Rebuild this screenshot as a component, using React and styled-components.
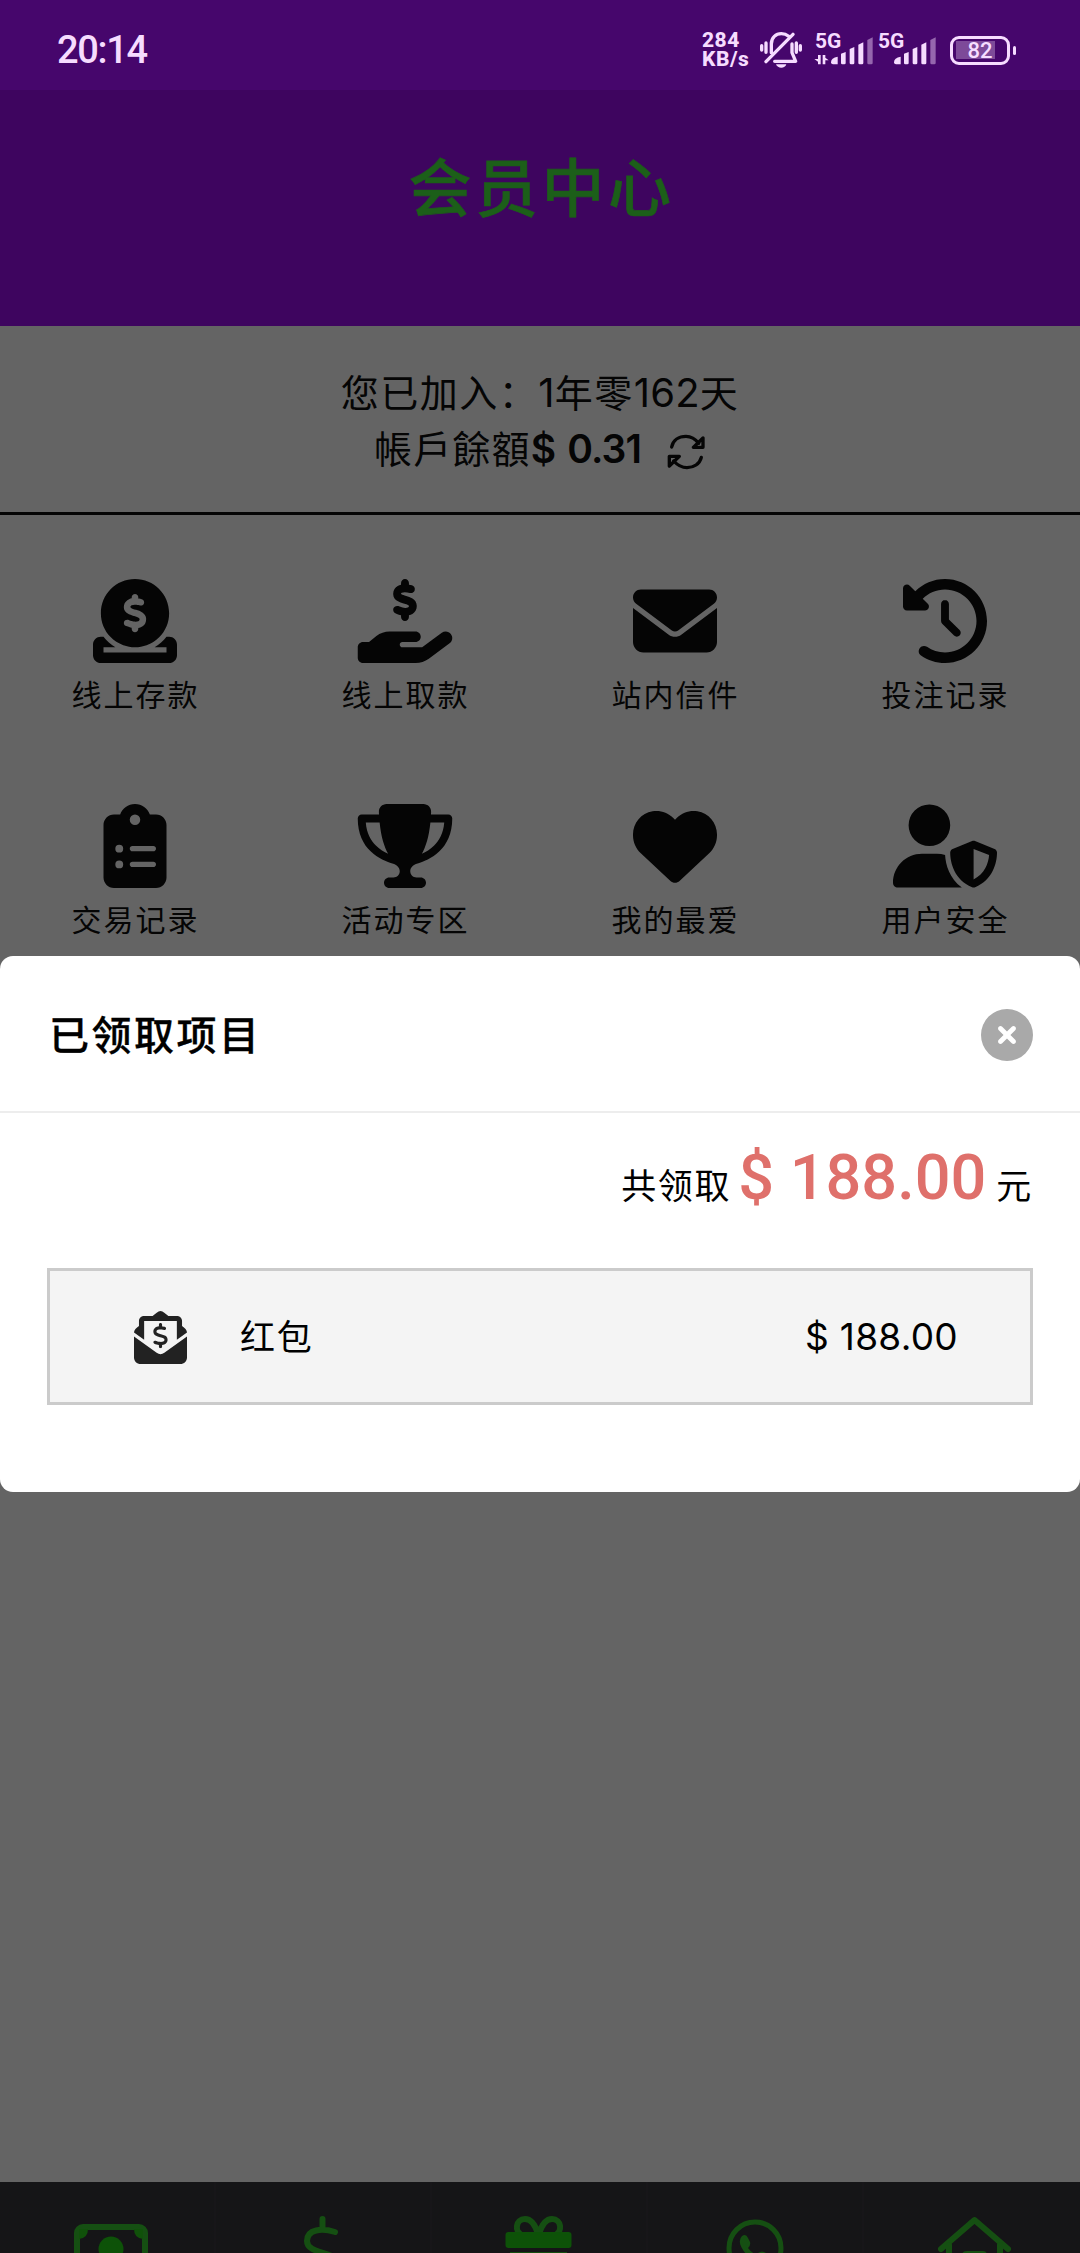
import { useState } from "react";
import styled, { createGlobalStyle, css } from "styled-components";
import {
  FaCircleDollarToSlot,
  FaCircleXmark,
  FaClipboardList,
  FaClockRotateLeft,
  FaDollarSign,
  FaEnvelope,
  FaHandHoldingDollar,
  FaHeart,
  FaTrophy,
  FaUserShield
} from "react-icons/fa6";

const MENUS = [
  { name: "线上存款", icon: FaCircleDollarToSlot },
  { name: "线上取款", icon: FaHandHoldingDollar },
  { name: "站内信件", icon: FaEnvelope },
  { name: "投注记录", icon: FaClockRotateLeft },
  { name: "交易记录", icon: FaClipboardList },
  { name: "活动专区", icon: FaTrophy },
  { name: "我的最爱", icon: FaHeart },
  { name: "用户安全", icon: FaUserShield }
];

const MutedBell = () => (
  <svg width="42" height="37" viewBox="300 96 126 111" fill="none">
    <g stroke="#f6dcff" strokeWidth="10" strokeLinecap="round">
      <path d="M334 158V132C334 112 348 101 364 101C372 101 380 104 386 109" />
      <path d="M396 132V158L407 184H344" strokeLinejoin="round" />
      <path d="M318 185L399 103" />
      <path d="M305 137V150M318 129V157M409 129V157M421 137V150" />
    </g>
    <path d="M348 193H379C376 207 352 207 348 193Z" fill="#f6dcff" />
  </svg>
);

const SignalBars = ({ data }) => (
  <svg width="60" height="28" viewBox="464 108 180 84">
    <g fill="#f6dcff">
      <path d="M515 184Q515 170 535 167V190H521Q515 190 515 184Z" />
      <path d="M545 158L559 153V186Q559 190 555 190H549Q545 190 545 186Z" />
      <path d="M571 144L585 138V186Q585 190 581 190H575Q571 190 571 186Z" />
      <path d="M597 131L612 124V186Q612 190 608 190H601Q597 190 597 186Z" />
      <path
        opacity="0.45"
        d="M624 117L640 109V186Q640 190 636 190H628Q624 190 624 186Z"
      />
      {data && (
        <path d="M476 162H484V190H476V182L465 174H476ZM490 162H498V170L508 178H498V190H490Z" />
      )}
    </g>
  </svg>
);

const RefreshIcon = () => (
  <svg width="39" height="36" viewBox="1100 282 117 108" fill="none">
    <g
      stroke="#050505"
      strokeWidth="10"
      strokeLinecap="round"
      strokeLinejoin="round"
    >
      <path d="M1114 321C1118 300 1136 289 1157 289C1174 289 1185 297 1195 310" />
      <path d="M1208 294V322H1179Z" />
      <path d="M1203 352C1198 372 1180 383 1160 383C1143 383 1130 374 1120 363" />
      <path d="M1107 378V349H1137Z" />
    </g>
  </svg>
);

const EnvelopeDollar = () => (
  <svg width="53" height="53" viewBox="0 0 512 512" fill="#222">
    <path d="M256 0C230 0 210 26 180 48H96C69 48 48 69 48 96V144C22 164 0 180 0 208L98 278V96H414V278L512 208C512 180 490 164 464 144V96C464 69 443 48 416 48H332C302 26 282 0 256 0Z" />
    <path d="M0 246L219 404Q256 430 293 404L512 246V448C512 483 483 512 448 512H64C29 512 0 483 0 448Z" />
    <FaDollarSign x="134" y="116" size="244" color="#222" />
  </svg>
);

const CashIcon = () => (
  <svg width="216" height="71" viewBox="0 0 216 71" fill="none">
    <rect x="77" y="45" width="68" height="46" rx="6" stroke="#154f12" strokeWidth="6" />
    <path d="M79 47H88Q88 56 79 57ZM143 47H134Q134 56 143 57Z" fill="#10510a" />
    <circle cx="111" cy="67" r="12.5" fill="#0d5208" />
  </svg>
);

const DollarIcon = () => (
  <svg width="216" height="71" viewBox="216 0 216 71" fill="none">
    <path
      d="M322.5 37V46M335 50C322 46 307 47 307 59C307 73 337 68 337 82"
      stroke="#154f12"
      strokeWidth="6"
      strokeLinecap="round"
    />
  </svg>
);

const GiftIcon = () => (
  <svg width="216" height="71" viewBox="432 0 216 71" fill="none">
    <path
      d="M538 52C535 42 530 37 525 37C515 37 515 50 521 52M539 52C542 42 547 37 552 37C562 37 562 50 556 52"
      stroke="#154f12"
      strokeWidth="6"
    />
    <rect x="505.5" y="50" width="66" height="16" rx="3" fill="#0d5208" />
    <path d="M510 70H567V71H510Z" fill="#154f12" />
  </svg>
);

const PhoneIcon = () => (
  <svg width="216" height="71" viewBox="648 0 216 71" fill="none">
    <circle cx="755" cy="66" r="26" stroke="#154f12" strokeWidth="5" />
    <path
      d="M742 54Q746 51 748 56L750 60Q751 63 748 66Q751 70 755 72H746Q736 60 742 54Z"
      fill="#154f12"
    />
    <path d="M758 71Q762 68 766 71Z" fill="#154f12" />
  </svg>
);

const HomeIcon = () => (
  <svg width="216" height="71" viewBox="864 0 216 71" fill="none">
    <g stroke="#154f12" strokeWidth="6" strokeLinecap="round" strokeLinejoin="round">
      <path d="M941 67L974.5 38L1008 67" />
      <path d="M949 63V80M1000 63V80" />
    </g>
    <path d="M962 80V73Q962 69 967 69H983Q987 69 987 73V80Z" fill="#154f12" />
  </svg>
);

const NAVS = [CashIcon, DollarIcon, GiftIcon, PhoneIcon, HomeIcon];

const App = () => {
  const [openModal, setOpenModal] = useState(true);

  return (
    <Page>
      <GlobalStyle />
      <StatusBar>
        <Time>20:14</Time>
        <StatusIcons>
          <Speed>
            <span>284</span>
            <span>KB/s</span>
          </Speed>
          <MutedBell />
          <Signal $first>
            <SignalLabel>5G</SignalLabel>
            <SignalBars data />
          </Signal>
          <Signal>
            <SignalLabel>5G</SignalLabel>
            <SignalBars />
          </Signal>
          <Battery>82</Battery>
        </StatusIcons>
      </StatusBar>
      <Header>会员中心</Header>
      <Account>
        <Joined>
          您已加入：<span>1</span>年零<span>162</span>天
        </Joined>
        <Balance>
          帳戶餘額<b>$ 0.31</b>
          <RefreshIcon />
        </Balance>
      </Account>
      <MenuGrid>
        {MENUS.map(({ name, icon: Icon }) => (
          <MenuItem key={name}>
            <Icon />
            <span>{name}</span>
          </MenuItem>
        ))}
      </MenuGrid>
      <BottomNav>
        {NAVS.map((Icon, index) => (
          <NavItem key={index}>
            <Icon />
          </NavItem>
        ))}
      </BottomNav>

      {openModal && (
        <Modal>
          <ModalHeader>
            <h2>已领取项目</h2>
            <CloseButton onClick={() => setOpenModal(false)}>
              <FaCircleXmark />
            </CloseButton>
          </ModalHeader>
          <Total>
            <span>共领取</span>
            <strong>$ 188.00</strong>
            <span>元</span>
          </Total>
          <Reward>
            <EnvelopeDollar />
            <RewardName>红包</RewardName>
            <RewardAmount>$ 188.00</RewardAmount>
          </Reward>
        </Modal>
      )}
    </Page>
  );
};

const GlobalStyle = createGlobalStyle`
  * {
    box-sizing: border-box;
  }
  body {
    margin: 0;
    background: #646464;
  }
`;

const flexCenter = css`
  display: flex;
  align-items: center;
  justify-content: center;
`;

const Page = styled.div`
  position: relative;
  display: flex;
  flex-direction: column;
  width: 1080px;
  height: 2253px;
  overflow: hidden;
  background: #646464;
  color: #050505;
  font-family: Inter, "Noto Sans CJK SC", sans-serif;
`;

const StatusBar = styled.div`
  display: flex;
  justify-content: space-between;
  align-items: center;
  height: 90px;
  padding: 10px 70px 0 57px;
  background: #46066c;
  color: #f6dcff;
  font-family: Roboto, sans-serif;
`;

const Time = styled.div`
  font-size: 38px;
  font-weight: 500;
  letter-spacing: -1.3px;
`;

const StatusIcons = styled.div`
  display: flex;
  align-items: center;
`;

const Speed = styled.div`
  display: flex;
  flex-direction: column;
  width: 58px;
  font-size: 21px;
  font-weight: 800;
  line-height: 19px;
  letter-spacing: 0.5px;
`;

const Signal = styled.div`
  position: relative;
  display: flex;
  margin-left: ${({ $first }) => ($first ? "12px" : "3px")};
  padding-top: 2px;
`;

const SignalLabel = styled.span`
  position: absolute;
  top: -5px;
  left: 1px;
  font-size: 21px;
  font-weight: 700;
  line-height: 22px;
`;

const Battery = styled.div`
  ${flexCenter};
  position: relative;
  width: 60px;
  height: 29px;
  margin-left: 13px;
  border: 3px solid #f6dcff;
  border-radius: 9px;
  background: linear-gradient(#7d4a99, #7d4a99) 3px center / 39px 18px no-repeat;
  font-size: 22px;
  font-weight: 500;
  &::after {
    content: "";
    position: absolute;
    right: -9px;
    width: 3px;
    height: 9px;
    border-radius: 2px;
    background: #f6dcff;
  }
`;

const Header = styled.h1`
  ${flexCenter};
  height: 236px;
  margin: 0;
  padding: 0 0 50px 3px;
  background: #3e055f;
  color: #1c5f19;
  font-size: 63px;
  font-weight: 500;
  letter-spacing: 3.5px;
  -webkit-text-stroke: 0.6px #1c5f19;
`;

const Account = styled.section`
  height: 189px;
  padding-top: 39px;
  border-bottom: 3px solid #050505;
  font-size: 38px;
  line-height: 56px;
  letter-spacing: 1.5px;
`;

const Joined = styled.div`
  text-align: center;
  span {
    font-size: 40px;
    letter-spacing: 0.2px;
  }
`;

const Balance = styled.div`
  ${flexCenter};
  font-family: Inter, "Noto Sans CJK TC", sans-serif;
  letter-spacing: 1.2px;
  b {
    font-size: 39px;
    font-weight: 600;
    letter-spacing: -0.9px;
    word-spacing: 3px;
  }
  svg {
    margin: 5px 0 0 26px;
  }
`;

const MenuGrid = styled.section`
  display: grid;
  grid-template-columns: repeat(4, 270px);
  grid-auto-rows: 225px;
  padding-top: 64px;
`;

const MenuItem = styled.div`
  display: flex;
  flex-direction: column;
  align-items: center;
  svg {
    width: 104px;
    height: 84px;
  }
  span {
    margin-top: 11px;
    padding-left: 1px;
    font-size: 30px;
    line-height: 42px;
    letter-spacing: 2px;
  }
`;

const BottomNav = styled.nav`
  display: grid;
  grid-template-columns: repeat(5, 216px);
  height: 71px;
  margin-top: auto;
  background: #151517;
`;

const NavItem = styled.div`
  display: flex;
  & + & {
    box-shadow: -2px 0 #171619;
  }
`;

const Modal = styled.div`
  position: absolute;
  top: 956px;
  left: 0;
  width: 100%;
  height: 536px;
  border-radius: 13px;
  background: #fff;
  color: #000;
`;

const ModalHeader = styled.div`
  display: flex;
  align-items: center;
  justify-content: space-between;
  height: 157px;
  padding: 2px 47px 0 49px;
  border-bottom: 2px solid #ededed;
  h2 {
    margin: 0 0 4px;
    font-size: 40px;
    font-weight: 500;
    letter-spacing: 2.5px;
    -webkit-text-stroke: 0.3px #000;
  }
`;

const CloseButton = styled.button`
  display: flex;
  padding: 0;
  border: 0;
  background: none;
  color: #a9a9a9;
  font-size: 52px;
  cursor: pointer;
`;

const Total = styled.div`
  display: flex;
  align-items: baseline;
  justify-content: flex-end;
  height: 155px;
  padding: 28px 47px 0 0;
  font-size: 35px;
  letter-spacing: 1.7px;
  strong {
    margin: 0 10px 0 7px;
    color: #df706b;
    font-family: Roboto, sans-serif;
    font-size: 63px;
    font-weight: 500;
    letter-spacing: 0;
  }
`;

const Reward = styled.div`
  display: flex;
  align-items: center;
  height: 137px;
  margin: 0 47px;
  padding: 2px 72px 0 84px;
  border: 3px solid #cbcbcb;
  background: #f4f4f4;
`;

const RewardName = styled.span`
  margin: 0 0 6px 53px;
  font-size: 35px;
  letter-spacing: 1.7px;
`;

const RewardAmount = styled.span`
  margin: 0 0 2px auto;
  font-size: 37px;
  letter-spacing: 0.3px;
`;

export default App;
